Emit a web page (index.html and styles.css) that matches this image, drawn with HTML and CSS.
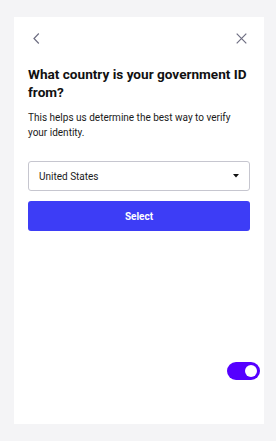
FILE: index.html
```html
<!DOCTYPE html>
<html>
<head>
<meta charset="utf-8">
<link rel="stylesheet" href="styles.css">
</head>
<body>
<div class="card">
  <div class="topbar">
    <button class="icon-btn" aria-label="Back">
      <svg width="7" height="11" viewBox="0 0 7 11"><path d="M5.8 0.5 L1 5.5 L5.8 10.5" fill="none" stroke="#6e6e82" stroke-width="1.2"/></svg>
    </button>
    <button class="icon-btn" aria-label="Close">
      <svg width="11" height="11" viewBox="0 0 11 11"><path d="M0.7 0.7 L10.3 10.3 M10.3 0.7 L0.7 10.3" fill="none" stroke="#6e6e82" stroke-width="1.2"/></svg>
    </button>
  </div>
  <h1 class="title">What country is your government ID from?</h1>
  <p class="desc">This helps us determine the best way to verify your identity.</p>
  <div class="select">
    <span>United States</span>
    <svg width="6" height="4" viewBox="0 0 6 4"><path d="M0 0 H6 L3 3.5 Z" fill="#111"/></svg>
  </div>
  <button class="primary">Select</button>
  <div class="toggle"><div class="knob"></div></div>
</div>
</body>
</html>
```
FILE: styles.css
```css
html, body {
  margin: 0;
  padding: 0;
}
body {
  background: #f4f4f6;
  font-family: Roboto, "Liberation Sans", sans-serif;
  width: 276px;
  height: 441px;
  overflow: hidden;
}
.card {
  position: relative;
  box-sizing: border-box;
  margin: 17px 0 0 14px;
  width: 250px;
  height: 407px;
  background: #fff;
  padding: 0 14px;
  display: flex;
  flex-direction: column;
}
.topbar {
  display: flex;
  justify-content: space-between;
  align-items: center;
  padding-top: 16px;
  height: 11px;
}
.icon-btn {
  border: 0;
  background: none;
  padding: 0;
  margin: 0;
  display: flex;
  align-items: center;
}
.topbar .icon-btn:first-child {
  margin-left: 5px;
}
.topbar .icon-btn:last-child {
  margin-right: 3px;
}
.title {
  margin: 21px 0 0;
  font-size: 13.6px;
  line-height: 18px;
  font-weight: 700;
  color: #111;
}
.desc {
  margin: 10px 0 0;
  font-size: 10px;
  line-height: 14.5px;
  color: #1a1a1a;
}
.select {
  margin-top: 21px;
  height: 30px;
  box-sizing: border-box;
  border: 1px solid #c6c6cf;
  border-radius: 3px;
  display: flex;
  align-items: center;
  justify-content: space-between;
  padding: 0 10px;
  font-size: 10px;
  color: #1a1a1a;
}
.primary {
  margin-top: 10px;
  height: 30px;
  border: 0;
  border-radius: 3px;
  background: #3d3df6;
  color: #fff;
  font-family: Roboto, "Liberation Sans", sans-serif;
  font-size: 10px;
  font-weight: 700;
}
.toggle {
  position: absolute;
  right: 4px;
  top: 345px;
  width: 33px;
  height: 18px;
  border-radius: 9px;
  background: #5500ff;
}
.knob {
  position: absolute;
  right: 3px;
  top: 3px;
  width: 12px;
  height: 12px;
  border-radius: 50%;
  background: #fff;
}
```
